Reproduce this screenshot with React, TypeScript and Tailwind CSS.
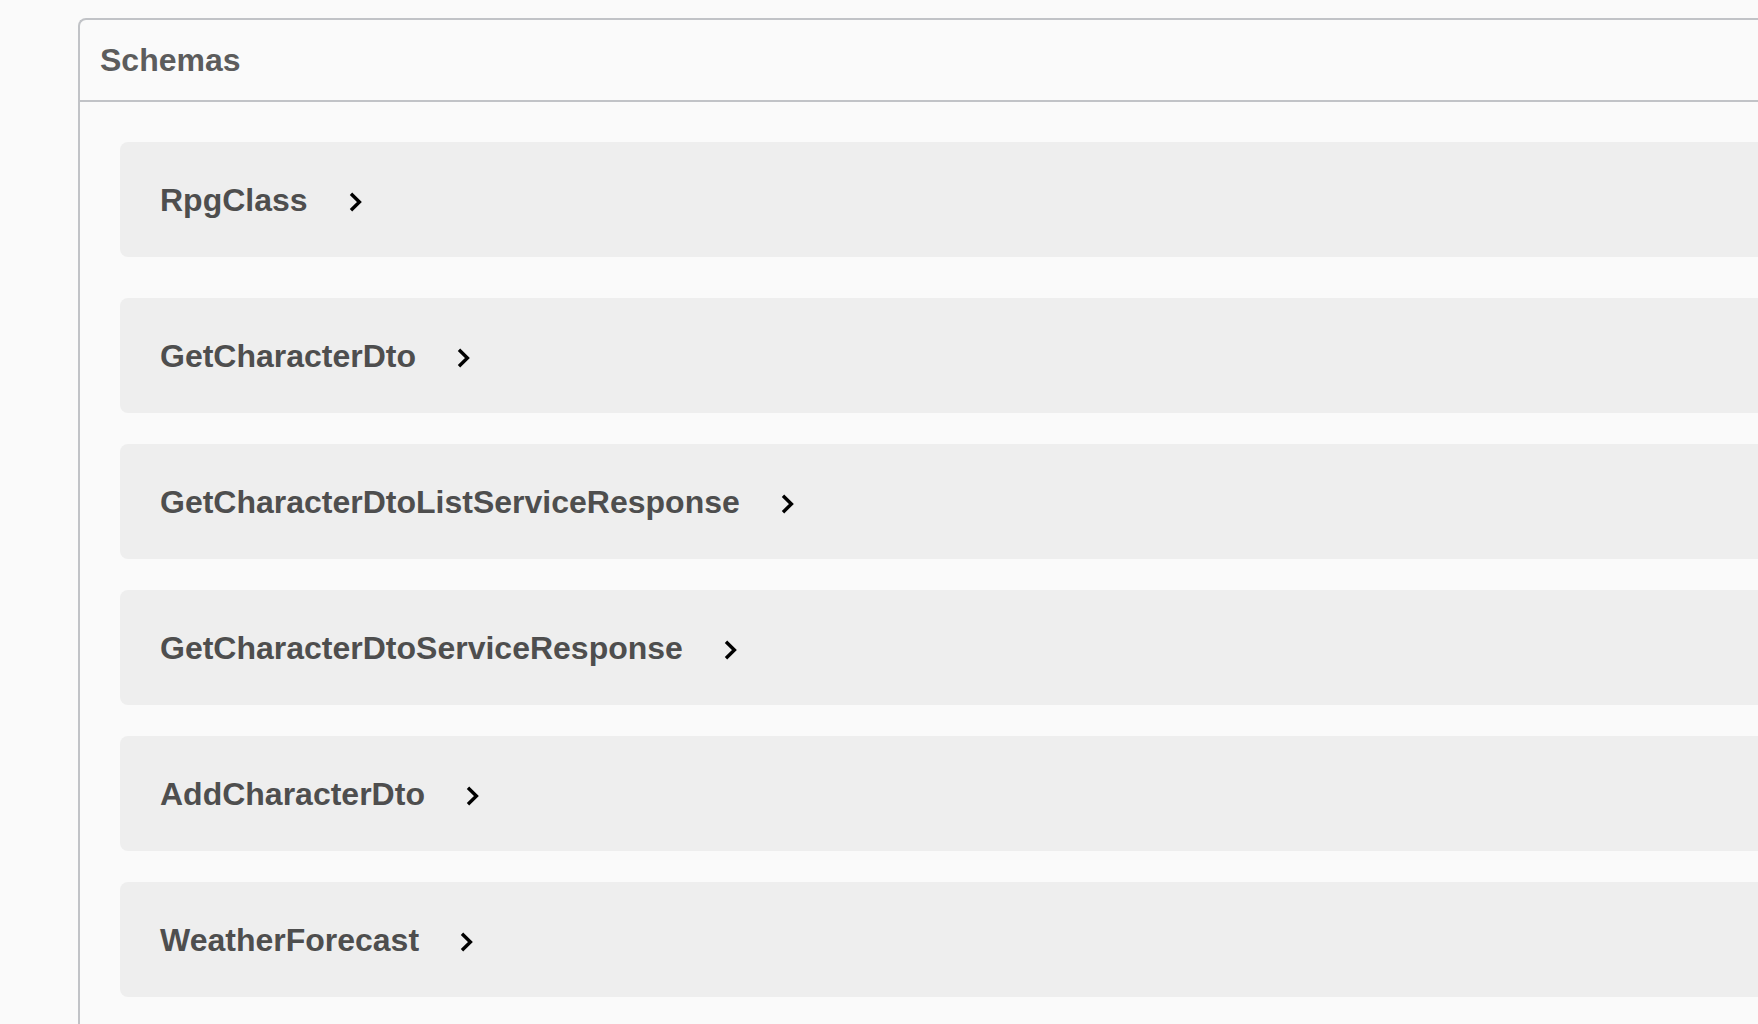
import React from "react";

const items = [
  "RpgClass",
  "GetCharacterDto",
  "GetCharacterDtoListServiceResponse",
  "GetCharacterDtoServiceResponse",
  "AddCharacterDto",
  "WeatherForecast",
];

function Chevron() {
  return (
    <svg
      viewBox="0 0 13 20"
      className="ml-[41px] mt-[5px] h-[20px] w-[13px] shrink-0"
      aria-hidden="true"
    >
      <path
        d="M2 1.8 L10.4 10 L2 18.2"
        fill="none"
        stroke="#000"
        strokeWidth="3.4"
        strokeLinejoin="miter"
      />
    </svg>
  );
}

export default function App() {
  return (
    <div
      className="h-[1024px] w-full overflow-hidden bg-[#fafafa]"
      style={{ fontFamily: '"Liberation Sans", Arial, sans-serif' }}
    >
      <div className="pl-[78px] pt-[18px]">
        <div className="w-[1800px] rounded-tl-[8px] border-l-2 border-t-2 border-[#c1c3c7]">
          <div className="flex h-[82px] items-center border-b-2 border-[#c1c3c7] pl-[20px]">
            <h4 className="text-[32px] font-bold leading-none text-[#5c5c5c]">Schemas</h4>
          </div>
          <div className="flex flex-col pl-[40px] pt-[40px]">
            {items.map((name, i) => (
              <div
                key={name}
                className={
                  "flex h-[115px] items-center rounded-l-[8px] bg-[#eeeeee] pl-[40px] " +
                  (i === 0 ? "mb-[41px]" : "mb-[31px]")
                }
              >
                <span className="text-[32px] font-bold leading-none text-[#4e4e4e]">
                  {name}
                </span>
                <Chevron />
              </div>
            ))}
          </div>
        </div>
      </div>
    </div>
  );
}
